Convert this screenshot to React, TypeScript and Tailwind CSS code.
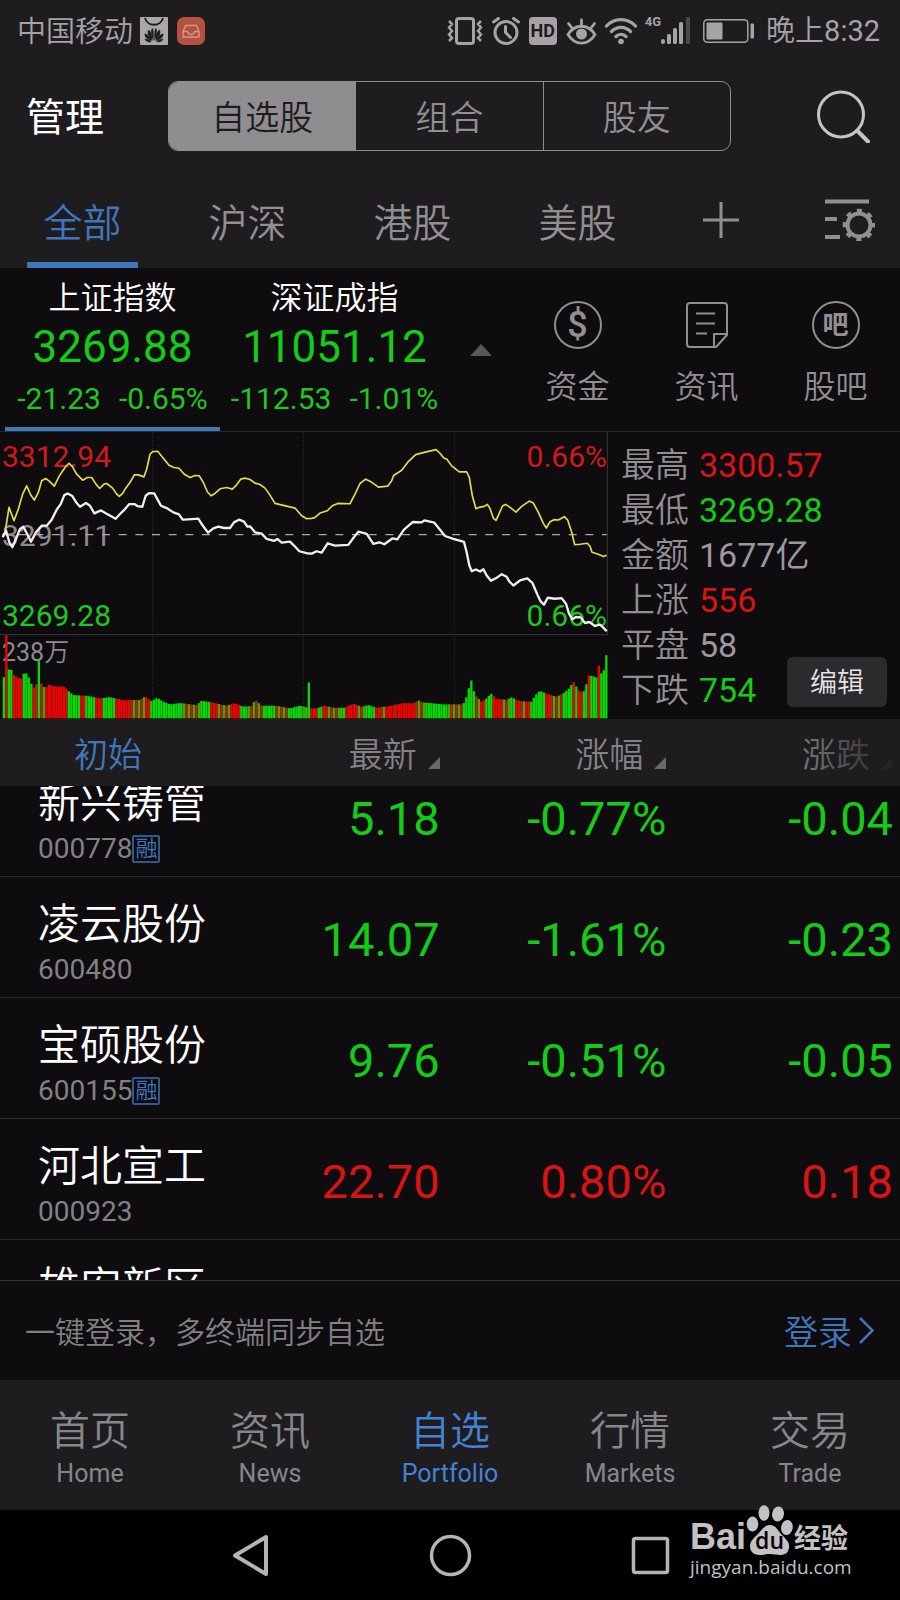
import { useLayoutEffect, useRef } from "react"
import type { ReactNode } from "react"
import clsx from "clsx"

type Tone = "up" | "down" | "flat"

const toneClass: Record<Tone, string> = {
  up: "text-[#d81414]",
  down: "text-[#14cb18]",
  flat: "text-[#9b999c]",
}

const segments = ["自选股", "组合", "股友"]
const markets = ["全部", "沪深", "港股", "美股"]

const indices = [
  { name: "上证指数", value: "3269.88", change: "-21.23", percent: "-0.65%" },
  { name: "深证成指", value: "11051.12", change: "-112.53", percent: "-1.01%" },
]

const stats: { label: string; value: string; tone: Tone }[] = [
  { label: "最高", value: "3300.57", tone: "up" },
  { label: "最低", value: "3269.28", tone: "down" },
  { label: "金额", value: "1677亿", tone: "flat" },
  { label: "上涨", value: "556", tone: "up" },
  { label: "平盘", value: "58", tone: "flat" },
  { label: "下跌", value: "754", tone: "down" },
]

const stocks: { name: string; code: string; margin?: boolean; price: string; percent: string; change: string; tone: Tone }[] = [
  { name: "新兴铸管", code: "000778", margin: true, price: "5.18", percent: "-0.77%", change: "-0.04", tone: "down" },
  { name: "凌云股份", code: "600480", price: "14.07", percent: "-1.61%", change: "-0.23", tone: "down" },
  { name: "宝硕股份", code: "600155", margin: true, price: "9.76", percent: "-0.51%", change: "-0.05", tone: "down" },
  { name: "河北宣工", code: "000923", price: "22.70", percent: "0.80%", change: "0.18", tone: "up" },
  { name: "雄安新区", code: "", price: "", percent: "", change: "", tone: "flat" },
]

const tabs = [
  { zh: "首页", en: "Home" },
  { zh: "资讯", en: "News" },
  { zh: "自选", en: "Portfolio" },
  { zh: "行情", en: "Markets" },
  { zh: "交易", en: "Trade" },
]

// Chart space is 1824 x 864 units, starting at y = 18
const averageLine =
  "8,330 15,320 20,290 27,245 42,285 55,250 68,205 80,180 92,207 103,223 115,200 125,165 137,158 147,165 163,181 178,150 195,125 207,112 217,122 230,145 248,163 262,155 275,155 288,175 299,188 312,175 320,173 338,187 350,205 358,212 368,203 377,187 390,170 403,147 415,147 432,153 440,130 450,85 458,77 473,76 487,93 507,118 522,125 537,127 553,145 570,155 585,149 598,150 610,170 622,198 633,210 645,203 660,189 680,185 697,190 710,177 722,160 735,157 750,161 765,172 780,176 795,187 810,208 825,233 850,239 885,247 905,270 920,279 935,278 945,275 960,262 982,255 997,240 1013,233 1050,234 1065,205 1080,173 1097,160 1110,166 1135,184 1163,181 1175,165 1181,149 1205,133 1225,107 1247,86 1270,80 1308,71 1320,82 1332,97 1340,99 1355,120 1378,138 1400,138 1408,155 1417,210 1428,249 1440,244 1453,242 1462,236 1470,248 1480,277 1488,284 1498,262 1508,240 1517,236 1530,245 1548,259 1565,242 1588,226 1600,232 1615,260 1630,293 1639,307 1650,288 1662,282 1675,283 1693,273 1703,283 1715,320 1724,357 1740,356 1762,353 1770,362 1776,380 1795,386 1810,393 1820,389"

const priceLine =
  "8,335 18,315 28,350 37,365 50,335 60,310 70,303 80,322 93,348 108,320 125,300 140,300 155,282 170,252 182,235 193,208 203,203 217,211 230,232 240,243 258,232 270,240 283,263 303,254 320,264 347,279 360,265 375,250 388,235 403,235 412,241 427,243 437,210 447,202 463,203 472,220 483,240 500,247 520,260 537,266 548,282 565,281 595,279 607,298 624,321 640,308 655,303 672,307 690,307 702,290 717,282 732,288 742,303 750,302 765,320 785,324 800,340 822,346 832,340 845,351 870,348 887,365 898,377 920,383 935,384 950,377 965,381 983,353 1005,360 1045,358 1060,337 1075,318 1100,325 1120,355 1138,350 1153,356 1178,338 1192,341 1212,312 1238,289 1265,290 1273,284 1303,291 1320,312 1335,331 1360,340 1392,349 1400,380 1408,420 1415,437 1428,432 1440,438 1450,431 1460,450 1473,466 1490,457 1505,446 1520,454 1528,468 1540,480 1560,465 1582,459 1597,472 1612,507 1622,528 1632,538 1643,517 1665,520 1685,518 1698,535 1707,565 1717,582 1728,575 1742,576 1755,593 1768,590 1785,602 1800,598 1810,607 1820,618"

// Top edge of the volume bars: [x, y]
const volumeProfile: [number, number][] = [
  [8, 765], [22, 732], [38, 735], [42, 750], [55, 758], [65, 760], [72, 745], [82, 745], [90, 765], [98, 785], [105, 790], [110, 775],
  [124, 775], [135, 790], [148, 778], [160, 783], [195, 785], [205, 797], [220, 810], [260, 812], [300, 820], [330, 816], [370, 825],
  [420, 825], [435, 814], [455, 828], [472, 818], [490, 830], [510, 838], [540, 834], [590, 840], [605, 827], [640, 833], [680, 842],
  [705, 834], [730, 845], [755, 843], [766, 824], [785, 842], [830, 842], [870, 850], [900, 842], [932, 850], [950, 850], [975, 842],
  [1000, 848], [1035, 848], [1060, 836], [1085, 845], [1105, 840], [1130, 848], [1170, 843], [1210, 834], [1240, 835], [1255, 826],
  [1270, 832], [1330, 838], [1390, 838], [1400, 815], [1406, 793], [1413, 760], [1420, 795], [1430, 815], [1445, 830], [1460, 820],
  [1473, 805], [1490, 822], [1520, 824], [1535, 817], [1560, 828], [1595, 830], [1605, 812], [1620, 797], [1640, 806], [1670, 815],
  [1690, 805], [1710, 788], [1720, 768], [1735, 795], [1750, 803], [1762, 770], [1767, 750], [1790, 757], [1797, 720], [1804, 745],
  [1812, 735], [1818, 690], [1824, 690],
]

// Single minutes that stand out: [x, y]
const volumeSpikes: [number, number][] = [[19, 630], [118, 705], [924, 772]]

// Colour runs of the bars: [end x, colour], m = red and green in turn
const volumeRuns: [number, "r" | "g" | "m"][] = [
  [14, "g"], [24, "r"], [40, "g"], [68, "r"], [98, "g"], [106, "r"], [114, "m"], [122, "g"], [138, "m"], [204, "r"], [242, "g"],
  [258, "r"], [288, "g"], [308, "r"], [348, "g"], [390, "r"], [432, "m"], [453, "r"], [548, "g"], [598, "m"], [627, "g"], [655, "r"],
  [692, "m"], [717, "r"], [745, "g"], [788, "m"], [828, "g"], [865, "m"], [905, "g"], [915, "m"], [930, "g"], [950, "r"], [966, "g"],
  [986, "r"], [1018, "m"], [1034, "g"], [1076, "r"], [1096, "m"], [1122, "g"], [1138, "r"], [1155, "m"], [1183, "r"], [1194, "m"],
  [1242, "r"], [1274, "m"], [1343, "g"], [1390, "m"], [1425, "g"], [1440, "m"], [1455, "r"], [1478, "g"], [1505, "r"], [1530, "m"],
  [1545, "g"], [1560, "r"], [1575, "m"], [1588, "r"], [1635, "g"], [1650, "r"], [1685, "m"], [1716, "g"], [1725, "r"], [1735, "g"],
  [1750, "r"], [1764, "g"], [1770, "r"], [1793, "g"], [1802, "r"], [1830, "g"],
]

const BAR = 7.5

function topAt(x: number) {
  const spike = volumeSpikes.find(([sx]) => Math.abs(sx - x) < BAR / 2)
  if (spike) return spike[1]
  const i = volumeProfile.findIndex(([px]) => px > x)
  if (i <= 0) return volumeProfile[0][1]
  const [x0, y0] = volumeProfile[i - 1]
  const [x1, y1] = volumeProfile[i]
  return y0 + ((x - x0) / (x1 - x0)) * (y1 - y0)
}

const bars = Array.from({ length: 242 }, (_, i) => {
  const x = 8 + i * BAR
  const mid = x + BAR / 2
  const run = volumeRuns.find(([end]) => mid < end)?.[1] ?? "g"
  let fill = run === "r" ? "#ea0505" : "#08d808"
  if (run === "m") fill = i % 2 ? "#b02808" : "#4fa00c"
  return { x, y: topAt(mid), fill }
})

function StatusBar() {
  return (
    <div className="flex h-[62px] items-center justify-between pl-[17px] pr-5 text-[29px] leading-[40px] text-[#a5a3a6]">
      <div className="flex items-center">
        <span className="pt-px font-[350]">中国移动</span>
        <svg className="ml-[7px] size-7" viewBox="0 0 28 28" aria-hidden="true">
          <rect width="28" height="28" rx="1" fill="#a9a7aa" />
          <path d="M5 1c2 9 16 9 18 0" fill="none" stroke="#1e1c1f" strokeWidth="1.8" />
          <g fill="#1e1c1f">
            <path d="M13.6 24C11 18 10.500 13 12 11.500c1.500-1 1.800 4 1.600 12.500zM14.400 24C17 18 17.500 13 16 11.500c-1.500-1-1.800 4-1.600 12.500z" />
            <path d="M12.600 24C8 19 6.500 15 8.500 13c2 0 4 5 4.100 11zM15.400 24C20 19 21.500 15 19.500 13c-2 0-4 5-4.100 11z" />
            <path d="M11.800 24.400C6 22 4 19 4.800 16.500c3 .5 6 4 7 7.900zM16.200 24.400C22 22 24 19 23.200 16.500c-3 .5-6 4-7 7.900z" />
            <path d="M11.300 25.200C8 25.800 5 24 4.500 21.800c3 0 5.500 1.500 6.800 3.400zM16.700 25.200c3.300.6 6.300-1.200 6.800-3.400-3 0-5.500 1.500-6.800 3.400z" />
          </g>
        </svg>
        <svg className="ml-[9px] size-7" viewBox="0 0 28 28" aria-hidden="true">
          <rect width="28" height="28" rx="7" fill="#b2523f" />
          <path d="M8.500 8.500h11l2.500 6v5.500h-16v-5.500zM6 14.500h4.500c.5 4 6.500 4 7 0H22" fill="none" stroke="#d09a8e" strokeWidth="1.400" strokeLinejoin="round" />
        </svg>
      </div>
      <div className="flex items-center">
        <svg className="h-7 w-9" viewBox="0 0 36 28" fill="none" stroke="currentColor" strokeWidth="3" aria-hidden="true">
          <rect x="9.500" y="1.500" width="17" height="25" rx="2.500" />
          <path d="M2 4l3 3-3 3.500 3 3.500-3 3.500 3 3.500-3 3M34 4l-3 3 3 3.500-3 3.500 3 3.500-3 3.500 3 3" strokeWidth="2.500" />
        </svg>
        <svg className="ml-[9px] size-7" viewBox="0 0 28 28" fill="none" stroke="currentColor" strokeWidth="3" strokeLinecap="round" aria-hidden="true">
          <circle cx="14" cy="15.500" r="11" />
          <path d="M13.500 9.500v6l5 5M1.500 5l5-3.500M26.500 5l-5-3.500" />
        </svg>
        <span className="ml-[9px] flex size-7 items-center justify-center rounded bg-[#a5a3a6] font-[Roboto] text-[18px] font-bold text-[#1e1c1f]">HD</span>
        <svg className="ml-[9px] h-7 w-[31px]" viewBox="0 0 31 28" fill="none" stroke="currentColor" strokeWidth="2.800" strokeLinecap="round" aria-hidden="true">
          <path d="M2 17.500C9 6.500 22 6.500 29 17.500 22 29 9 29 2 17.500zM15.500 8V3M6 11L2.500 6.500M25 11l3.500-4.500" />
          <circle cx="15.500" cy="17" r="5.500" fill="currentColor" stroke="none" />
        </svg>
        <svg className="ml-2 h-7 w-8" viewBox="0 0 32 28" fill="none" stroke="currentColor" strokeWidth="3.200" strokeLinecap="round" aria-hidden="true">
          <path d="M1.500 9c8-8.500 21-8.500 29 0M6.500 14.500c5.500-5.500 13.500-5.500 19 0M11 19.500c3-3 7-3 10 0" />
          <circle cx="16" cy="24.500" r="2.800" fill="currentColor" stroke="none" />
        </svg>
        <span className="ml-2 self-start pt-[3px] font-[Roboto] text-[13px] font-bold leading-4">4G</span>
        <svg className="h-7 w-[29px]" viewBox="0 0 29 28" fill="currentColor" aria-hidden="true">
          <rect x="0" y="22" width="4" height="5" rx="2" />
          <rect x="6" y="17" width="4" height="10" rx="1.500" />
          <rect x="12" y="11" width="4" height="16" rx="1.500" />
          <rect x="18" y="5" width="4" height="22" rx="1.500" />
          <rect x="25" y="0" width="4" height="27" rx="1.500" opacity=".35" />
        </svg>
        <svg className="ml-[13px] h-6 w-[51px]" viewBox="0 0 51 24" fill="none" stroke="currentColor" aria-hidden="true">
          <rect x=".8" y=".8" width="44" height="22.400" rx="3.500" strokeWidth="1.500" />
          <rect x="3.500" y="3.500" width="16" height="17" rx="1" fill="currentColor" stroke="none" />
          <rect x="47.500" y="4.500" width="3.500" height="15" rx="1" fill="currentColor" stroke="none" />
        </svg>
        <span className="ml-3">
          <span className="font-[350]">晚上</span>8:32
        </span>
      </div>
    </div>
  )
}

function TopBar() {
  return (
    <div className="flex items-center pb-[10px] pl-[26px] pr-[30px] pt-[19px]">
      <button type="button" className="pt-1 text-[39px] leading-[54px] text-white">管理</button>
      <div className="ml-16 mr-[86px] flex h-[70px] flex-1 divide-x divide-[#8f8d90] overflow-hidden rounded-[10px] border border-[#8f8d90]">
        {segments.map((label, i) => (
          <button
            key={label}
            type="button"
            aria-pressed={i === 0}
            className={clsx(
              "flex-1 pt-[3px] text-[34px] font-[350] leading-[44px]",
              i === 0 ? "bg-[#8f8d90] text-[#1e1c1f]" : "text-[#918f92]",
            )}
          >
            {label}
          </button>
        ))}
      </div>
      <button type="button" aria-label="搜索">
        <svg className="size-[53px]" viewBox="0 0 53 53" fill="none" stroke="#c6c4c7" strokeWidth="3" strokeLinecap="round" aria-hidden="true">
          <circle cx="24" cy="24.500" r="22.500" />
          <path d="M40.500 41l10.500 10.500" strokeWidth="4" />
        </svg>
      </button>
    </div>
  )
}

function MarketTabs() {
  return (
    <nav className="flex h-[107px] items-stretch">
      <div className="flex flex-1">
        {markets.map((label, i) => (
          <a key={label} href="#" className="flex flex-1 justify-center">
            <span
              className={clsx(
                "flex w-[111px] items-center justify-center border-b-[6px] pt-6 text-[39px] font-[350] leading-[52px]",
                i === 0 ? "border-[#3f77bb] text-[#3f77bb]" : "border-transparent text-[#918f92]",
              )}
            >
              {label}
            </span>
          </a>
        ))}
      </div>
      <div className="flex w-60 items-center justify-between pl-[43px] pr-[25px] pt-[11px]">
        <button type="button" aria-label="添加">
          <svg className="size-9" viewBox="0 0 36 36" stroke="#918f92" strokeWidth="3" aria-hidden="true">
            <path d="M18 0v36M0 18h36" />
          </svg>
        </button>
        <button type="button" aria-label="设置">
          <svg className="h-[42px] w-[50px]" viewBox="0 0 50 42" fill="none" stroke="#918f92" aria-hidden="true">
            <path d="M0 2.500h44M0 20h12M0 38h15" strokeWidth="4" />
            <circle cx="34" cy="26" r="11.500" strokeWidth="4" />
            <circle cx="34" cy="26" r="14" strokeWidth="4.500" strokeDasharray="5 5.996" strokeDashoffset="2.500" />
          </svg>
        </button>
      </div>
    </nav>
  )
}

function Shortcut({ label, children }: { label: string; children: ReactNode }) {
  return (
    <a href="#" className="flex flex-1 flex-col items-center pt-8 text-[#918f92]">
      <span className="flex h-[50px] items-center justify-center">{children}</span>
      <span className="mt-[15px] text-[32px] font-[350] leading-[44px]">{label}</span>
    </a>
  )
}

function IndexStrip() {
  return (
    <section className="flex h-[164px] border-b border-[#2c2b2e]">
      {indices.map((item, i) => (
        <button
          key={item.name}
          type="button"
          className={clsx(
            "flex flex-col items-center border-b-4 pt-2",
            i === 0 ? "ml-[5px] w-[215px] border-[#3f77bb]" : "w-[229px] border-transparent",
          )}
        >
          <span className="text-[32px] font-[350] leading-[44px] text-white">{item.name}</span>
          <span className="text-[44px] leading-[54px] text-[#14cb18]">{item.value}</span>
          <span className="flex gap-[18px] text-[30px] leading-[50px] text-[#1fc71f]">
            <span>{item.change}</span>
            <span>{item.percent}</span>
          </span>
        </button>
      ))}
      <button type="button" aria-label="收起" className="flex w-16 items-center justify-center">
        <svg className="h-3 w-[22px]" viewBox="0 0 22 12" fill="#59575a" aria-hidden="true">
          <path d="M0 12L11 0l11 12z" />
        </svg>
      </button>
      <div className="flex flex-1">
        <Shortcut label="资金">
          <span className="flex size-12 items-center justify-center rounded-full border-2 border-current font-[Roboto] text-[36px] font-medium leading-none">$</span>
        </Shortcut>
        <Shortcut label="资讯">
          <svg className="h-[46px] w-[42px]" viewBox="0 0 42 46" fill="none" stroke="currentColor" strokeWidth="2" strokeLinejoin="round" aria-hidden="true">
            <path d="M4 1h34a3 3 0 0 1 3 3v29L30 45H4a3 3 0 0 1-3-3V4a3 3 0 0 1 3-3zM28 44V32h12" />
            <path d="M10 11.500h19M10 21.500h19M10 31.500h11" />
          </svg>
        </Shortcut>
        <Shortcut label="股吧">
          <span className="flex size-12 items-center justify-center rounded-full border-2 border-current text-[26px] font-bold leading-none">吧</span>
        </Shortcut>
      </div>
    </section>
  )
}

function Chart() {
  return (
    <div className="relative flex-1 text-[30px] leading-9">
      <span className="absolute left-[2px] top-[7px] text-[#d01a1a]">3312.94</span>
      <span className="absolute left-[2px] top-[86px] text-[#8d8b8e]">3291.11</span>
      <span className="absolute left-[2px] top-[166px] text-[#1fc71f]">3269.28</span>
      <span className="absolute right-[1px] top-[7px] text-[#d01a1a]">0.66%</span>
      <span className="absolute right-[1px] top-[166px] text-[#1fc71f]">0.66%</span>
      <span className="absolute left-[2px] top-[203px] text-[25px] font-[350] text-[#8d8b8e]">
        <span className="font-normal">238</span>万
      </span>
      <svg className="relative size-full" viewBox="0 18 1824 864" preserveAspectRatio="none" fill="none" aria-hidden="true">
        <g stroke="#39373a" strokeWidth="3">
          <path d="M458 18V880M910 18V880M1363 18V880" strokeDasharray="3 5" />
          <path d="M0 628H1824M1822 18V628" />
        </g>
        <path d="M6 327H1820" stroke="#a9a7aa" strokeWidth="4" strokeDasharray="24 26" />
        {bars.map((bar) => (
          <rect key={bar.x} x={bar.x} y={bar.y} width="7" height={880 - bar.y} fill={bar.fill} />
        ))}
        <polyline points={averageLine} stroke="#e5dc4b" strokeWidth="5" strokeLinejoin="round" />
        <polyline points={priceLine} stroke="#f0eef1" strokeWidth="7" strokeLinejoin="round" />
      </svg>
    </div>
  )
}

function MarketPanel() {
  return (
    <section className="flex h-[287px]">
      <Chart />
      <div className="flex w-[292px] items-end justify-between pb-3 pl-[13px] pr-[13px]">
        <dl className="self-start pt-[11px]">
          {stats.map((s) => (
            <div key={s.label} className="flex gap-[10px] text-[34px] leading-[45px]">
              <dt className="font-[350] text-[#918f92]">{s.label}</dt>
              <dd className={toneClass[s.tone]}>{s.value}</dd>
            </div>
          ))}
        </dl>
        <button type="button" className="-ml-16 h-[50px] w-[100px] shrink-0 rounded-md bg-[#2b2a2d] pt-[2px] text-[27px] font-[350] text-[#e6e4e7]">
          编辑
        </button>
      </div>
    </section>
  )
}

function SortMark() {
  return (
    <svg className="ml-[11px] mt-[17px] size-3" viewBox="0 0 12 12" fill="#69676a" aria-hidden="true">
      <path d="M12 0v12H0z" />
    </svg>
  )
}

function StockTable() {
  const listRef = useRef<HTMLDivElement>(null)

  useLayoutEffect(() => {
    if (listRef.current) listRef.current.scrollTop = 30
  }, [])

  return (
    <div ref={listRef} className="min-h-0 flex-1 overflow-y-auto border-b border-[#343235] [scrollbar-width:none]">
      <table className="w-full table-fixed border-separate border-spacing-0">
        <thead className="sticky top-0 z-10 bg-[#1e1c1f] text-[34px] leading-[44px] text-[#838184]">
          <tr className="h-[67px]">
            <th scope="col" className="w-[220px] p-0 pr-1 pt-1 font-[350] text-[#3f77bb]">初始</th>
            <th scope="col" className="p-0 pr-[7px] pt-1 font-[350]">
              <button type="button" className="flex w-full items-center justify-end">最新<SortMark /></button>
            </th>
            <th scope="col" className="p-0 pr-[7px] pt-1 font-[350]">
              <button type="button" className="flex w-full items-center justify-end">涨幅<SortMark /></button>
            </th>
            <th scope="col" className="relative p-0 pr-[7px] pt-1 font-[350]">
              <button type="button" className="flex w-full items-center justify-end">涨跌<SortMark /></button>
              <span className="pointer-events-none absolute inset-y-0 right-0 w-[108px] bg-linear-to-r from-transparent to-[#1e1c1f]" />
            </th>
          </tr>
        </thead>
        <tbody>
          {stocks.map((s) => (
            <tr key={s.name} className="h-[121px] [&>*]:border-b [&>*]:border-[#2a292c]">
              <th scope="row" className="whitespace-nowrap p-0 pb-[9px] pl-[38px] pt-[21px] text-left font-normal">
                <span className="block text-[42px] font-[350] leading-[54px] text-white">{s.name}</span>
                <span className="flex h-9 items-center text-[28px] leading-9 text-[#838184]">
                  {s.code}
                  {s.margin && (
                    <span className="flex size-7 items-center justify-center rounded-[2px] border-2 border-[#2f5a8e] text-[22px] font-[350] leading-none text-[#3f77bb]">
                      融
                    </span>
                  )}
                </span>
              </th>
              {[s.price, s.percent, s.change].map((value, i) => (
                <td key={i} className={clsx("p-0 pr-[7px] pt-[6px] text-right text-[47px] leading-[56px]", toneClass[s.tone])}>
                  {value}
                </td>
              ))}
            </tr>
          ))}
        </tbody>
      </table>
    </div>
  )
}

function LoginBar() {
  return (
    <div className="flex h-[99px] items-center justify-between pl-[25px] pr-[26px] font-[350]">
      <span className="pt-1 text-[30px] leading-10 text-[#838184]">一键登录，多终端同步自选</span>
      <a href="#" className="flex items-center gap-[7px] text-[34px] leading-[44px] text-[#3f77bb]">
        <span className="pt-1">登录</span>
        <svg className="h-[27px] w-[15px]" viewBox="0 0 15 27" fill="none" stroke="currentColor" strokeWidth="2.500" aria-hidden="true">
          <path d="M1 1l12.500 12.500L1 26" />
        </svg>
      </a>
    </div>
  )
}

function TabBar() {
  return (
    <nav className="flex h-[130px] bg-[#1e1c1f]">
      {tabs.map((tab) => (
        <a
          key={tab.en}
          href="#"
          className={clsx(
            "flex flex-1 flex-col items-center pt-[26px]",
            tab.en === "Portfolio" ? "text-[#4283d3]" : "text-[#85878a]",
          )}
        >
          <span className="text-[40px] font-[350] leading-[52px]">{tab.zh}</span>
          <span className="text-[25px] leading-8">{tab.en}</span>
        </a>
      ))}
    </nav>
  )
}

function Watermark() {
  return (
    <div className="absolute bottom-[21px] right-[50px] w-[160px] text-[#c3c1c4]">
      <div className="flex h-[50px] items-end">
        <span className="font-['Liberation_Sans'] text-[36px] font-bold leading-[36px]">Bai</span>
        <span className="relative h-[50px] w-12 shrink-0">
          <svg className="h-[50px] w-12" viewBox="0 0 48 50" fill="currentColor" aria-hidden="true">
            <ellipse cx="6.500" cy="19" rx="5.800" ry="7.500" />
            <ellipse cx="18" cy="8" rx="5.500" ry="7.800" />
            <ellipse cx="32" cy="9" rx="6" ry="7.500" transform="rotate(8 32 9)" />
            <ellipse cx="41" cy="22.500" rx="5.800" ry="7.500" transform="rotate(10 41 22)" />
            <path d="M24 20c6 0 8 6 12 10 5 5 8 8 7 13-1 5-4 7-9 7-4 0-6-1-10-1s-6 1-10 1c-6 0-10-3-10-9 0-5 4-8 8-12 3-3 6-9 12-9z" />
          </svg>
          <span className="absolute inset-x-0 bottom-0 pr-px text-center font-['Open_Sans'] text-[23px] font-semibold leading-[30px] text-black">du</span>
        </span>
        <span className="whitespace-nowrap text-[27px] font-bold leading-[32px]">经验</span>
      </div>
      <div className="font-['Open_Sans'] text-[19px] leading-6">jingyan.baidu.com</div>
    </div>
  )
}

function SystemNav() {
  return (
    <div className="relative flex h-[90px] shrink-0 items-center justify-center gap-[157px] bg-black text-[#b5b3b6]">
      <button type="button" aria-label="返回">
        <svg className="size-[43px]" viewBox="0 0 43 43" fill="none" stroke="currentColor" strokeWidth="4" strokeLinejoin="round" aria-hidden="true">
          <path d="M37 3v37L6 21.500z" />
        </svg>
      </button>
      <button type="button" aria-label="主屏幕">
        <svg className="size-[43px]" viewBox="0 0 43 43" fill="none" stroke="currentColor" strokeWidth="3.500" aria-hidden="true">
          <circle cx="21.500" cy="21.500" r="19" />
        </svg>
      </button>
      <button type="button" aria-label="最近任务">
        <svg className="size-[43px]" viewBox="0 0 43 43" fill="none" stroke="currentColor" strokeWidth="3.500" aria-hidden="true">
          <rect x="4.500" y="4.500" width="34" height="34" rx="2" />
        </svg>
      </button>
      <Watermark />
    </div>
  )
}

export default function App() {
  return (
    <div className="flex h-screen flex-col bg-[#0e0c0f] font-[Roboto,'Noto_Sans_CJK_SC',sans-serif]">
      <header className="bg-[#1e1c1f]">
        <StatusBar />
        <TopBar />
        <MarketTabs />
      </header>
      <IndexStrip />
      <MarketPanel />
      <StockTable />
      <LoginBar />
      <TabBar />
      <SystemNav />
    </div>
  )
}
